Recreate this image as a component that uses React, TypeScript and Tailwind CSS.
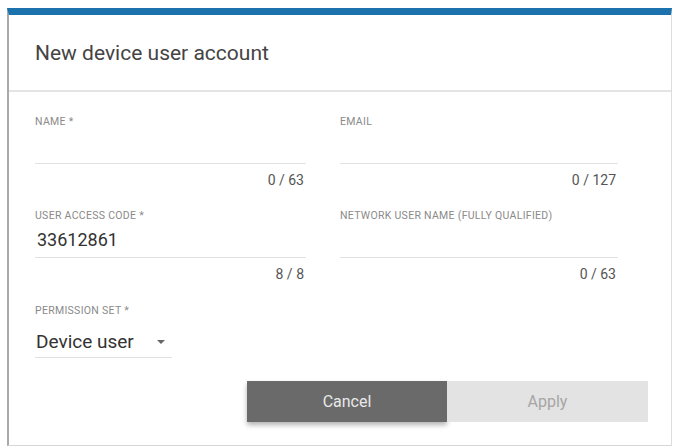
import React from "react";

interface TextFieldProps {
  label: string;
  value?: string;
  max: number;
}

const labelClass =
  "text-[10.5px] leading-[12px] tracking-[0.3px] text-[#8a8a8a] uppercase";

const TextField: React.FC<TextFieldProps> = ({ label, value = "", max }) => {
  return (
    <div className="flex flex-col">
      <span className={labelClass}>{label}</span>
      <div className="h-[36px] flex items-end pb-[5px] border-b border-[#e2e2e2]">
        <span className="text-[18px] leading-[24px] text-[#333] pl-[2px]">
          {value}
        </span>
      </div>
      <span className="mt-[8px] text-[14px] leading-[16px] text-[#555] text-right pr-[2px]">
        {value.length} / {max}
      </span>
    </div>
  );
};

export default function App() {
  return (
    <div
      className="w-[673px] h-[448px] bg-white pt-[8px] pl-[7px] pr-[1px] pb-[2px]"
      style={{ fontFamily: "Roboto, 'Liberation Sans', sans-serif" }}
    >
      <div className="h-full flex flex-col border-t-[7px] border-t-[#1b72ac] border-l-2 border-l-[#a9a9a9] border-r border-r-[#dcdcdc] border-b border-b-[#d6d6d6]">
        {/* Header */}
        <div className="h-[77px] flex items-center pl-[26px] border-b-2 border-[#e4e4e4]">
          <h1 className="text-[21px] leading-[28px] text-[#444] font-normal">
            New device user account
          </h1>
        </div>

        {/* Form body */}
        <div className="pl-[26px] pt-[24px] grid grid-cols-[271px_278px] gap-x-[34px] gap-y-[22px]">
          <TextField label="Name *" max={63} />
          <TextField label="Email" max={127} />
          <TextField label="User access code *" value="33612861" max={8} />
          <TextField label="Network user name (fully qualified)" max={63} />
        </div>

        {/* Permission set select */}
        <div className="pl-[26px] pt-[23px] flex flex-col">
          <span className={labelClass}>Permission set *</span>
          <div className="w-[137px] h-[41px] flex items-end pb-[3px] border-b border-[#e2e2e2]">
            <span className="text-[19px] leading-[24px] text-[#333] pl-[1px]">
              Device user
            </span>
            <svg
              width="8"
              height="4"
              viewBox="0 0 8 4"
              className="ml-[23px] mb-[10px]"
            >
              <path d="M0 0h8L4 4z" fill="#666" />
            </svg>
          </div>
        </div>

        {/* Actions */}
        <div className="mt-[23px] pr-[23px] flex justify-end">
          <button className="w-[200px] h-[41px] bg-[#6a6a6a] text-[#e8e8e8] text-[16px] shadow-[0_3px_5px_rgba(0,0,0,0.3)]">
            Cancel
          </button>
          <button className="w-[201px] h-[41px] bg-[#e3e3e3] text-[#a6a6a6] text-[16px]">
            Apply
          </button>
        </div>
      </div>
    </div>
  );
}
